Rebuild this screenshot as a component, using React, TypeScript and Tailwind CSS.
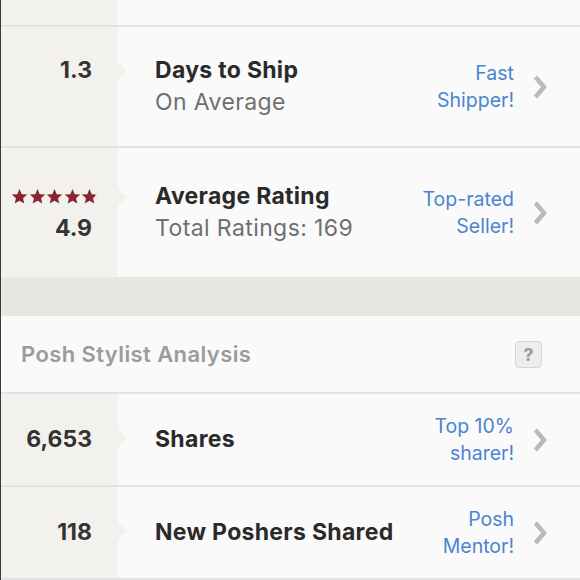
import React from "react"

const LEFT_BG = "bg-[#f3f1ee]"

const Chevron: React.FC = () => (
    <svg width="14" height="26" viewBox="0 0 14 26" className="shrink-0">
        <polyline points="2.5,3 11,13 2.5,23" fill="none" stroke="#bababa" strokeWidth="4.5" strokeLinejoin="miter" />
    </svg>
)

const Star: React.FC<{ partial?: boolean }> = ({ partial }) => (
    <svg width="17" height="17" viewBox="0 0 24 24">
        <defs>
            <linearGradient id="part">
                <stop offset="86%" stopColor="#8a2433" />
                <stop offset="86%" stopColor="#b9a4a6" />
            </linearGradient>
        </defs>
        <path
            d="M12 1.5l3.1 7.2 7.8.6-5.9 5.1 1.8 7.6L12 18l-6.8 4 1.8-7.6-5.9-5.1 7.8-.6z"
            fill={partial ? "url(#part)" : "#8a2433"}
        />
    </svg>
)

type StatRowProps = {
    value?: string
    stars?: boolean
    title: string
    subtitle?: string
    badge: [string, string]
    height: string
    border?: boolean
}

const StatRow: React.FC<StatRowProps> = ({ value, stars, title, subtitle, badge, height, border = true }) => {
    return (
        <div className={`flex ${height} ${border ? "border-b-2 border-[#e4e2e0]" : ""}`}>
            {/* Left value column */}
            <div className={`relative w-[117px] shrink-0 ${LEFT_BG} flex flex-col justify-center items-end pr-[26px]`}>
                <div className="relative flex flex-col items-end">
                    <div className="h-[32px] flex items-center">
                        {stars ? (
                            <div className="flex gap-[0.5px] mr-[-6px]">
                                <Star />
                                <Star />
                                <Star />
                                <Star />
                                <Star partial />
                            </div>
                        ) : (
                            <span className="text-[23px] font-bold text-[#333]">{value}</span>
                        )}
                    </div>
                    {subtitle && (
                        <div className="h-[32px] flex items-center">
                            {stars && <span className="text-[23px] font-bold text-[#333]">{value}</span>}
                        </div>
                    )}
                </div>
                {/* notch */}
                <div
                    className={`absolute left-full w-0 h-0 border-y-[9px] border-y-transparent border-l-[9px] border-l-[#f3f1ee] ${subtitle ? "top-1/2 -mt-[25px]" : "top-1/2 -mt-[11px]"}`}
                />
            </div>
            {/* Title */}
            <div className="flex-1 flex flex-col justify-center pl-[37px]">
                <div className="h-[32px] flex items-center text-[23px] font-bold tracking-[0.3px] text-[#2a2a2a] whitespace-nowrap">{title}</div>
                {subtitle && (
                    <div className="h-[32px] flex items-center text-[23px] tracking-[0.4px] text-[#6f6f6f] whitespace-nowrap">{subtitle}</div>
                )}
            </div>
            {/* Badge + chevron */}
            <div className="flex items-center gap-[19px] pr-[33px]">
                <div className="text-right text-[19.5px] leading-[27px] text-[#4a84d2]">
                    <div>{badge[0]}</div>
                    <div>{badge[1]}</div>
                </div>
                <Chevron />
            </div>
        </div>
    )
}

const App: React.FC = () => {
    return (
        <div className="w-[580px] h-[580px] overflow-hidden bg-[#fbfafa] border-l border-[#3a3a3a] font-['Inter',sans-serif]">
            {/* Top stub of previous row */}
            <div className="flex h-[27px] border-b-2 border-[#e4e2e0]">
                <div className={`w-[117px] ${LEFT_BG}`} />
            </div>
            <StatRow value="1.3" title="Days to Ship" subtitle="On Average" badge={["Fast", "Shipper!"]} height="h-[121px]" />
            <StatRow value="4.9" stars title="Average Rating" subtitle="Total Ratings: 169" badge={["Top-rated", "Seller!"]} height="h-[129px]" border={false} />
            {/* Band */}
            <div className="h-[39px] bg-[#e9e7e4]" />
            {/* Section header */}
            <div className="flex items-center justify-between h-[78px] pl-[20px] pr-[38px] border-b-2 border-[#e4e2e0]">
                <span className="text-[22px] font-semibold tracking-[0.4px] text-[#9b9b9b]">Posh Stylist Analysis</span>
                <div className="w-[27px] h-[27px] rounded-[4px] bg-[#ededeb] border border-[#d6d6d3] flex items-center justify-center text-[18px] font-bold text-[#9a9a9a]">
                    ?
                </div>
            </div>
            <StatRow value="6,653" title="Shares" badge={["Top 10%", "sharer!"]} height="h-[93px]" />
            <StatRow value="118" title="New Poshers Shared" badge={["Posh", "Mentor!"]} height="h-[93px]" />
        </div>
    )
}

export default App
